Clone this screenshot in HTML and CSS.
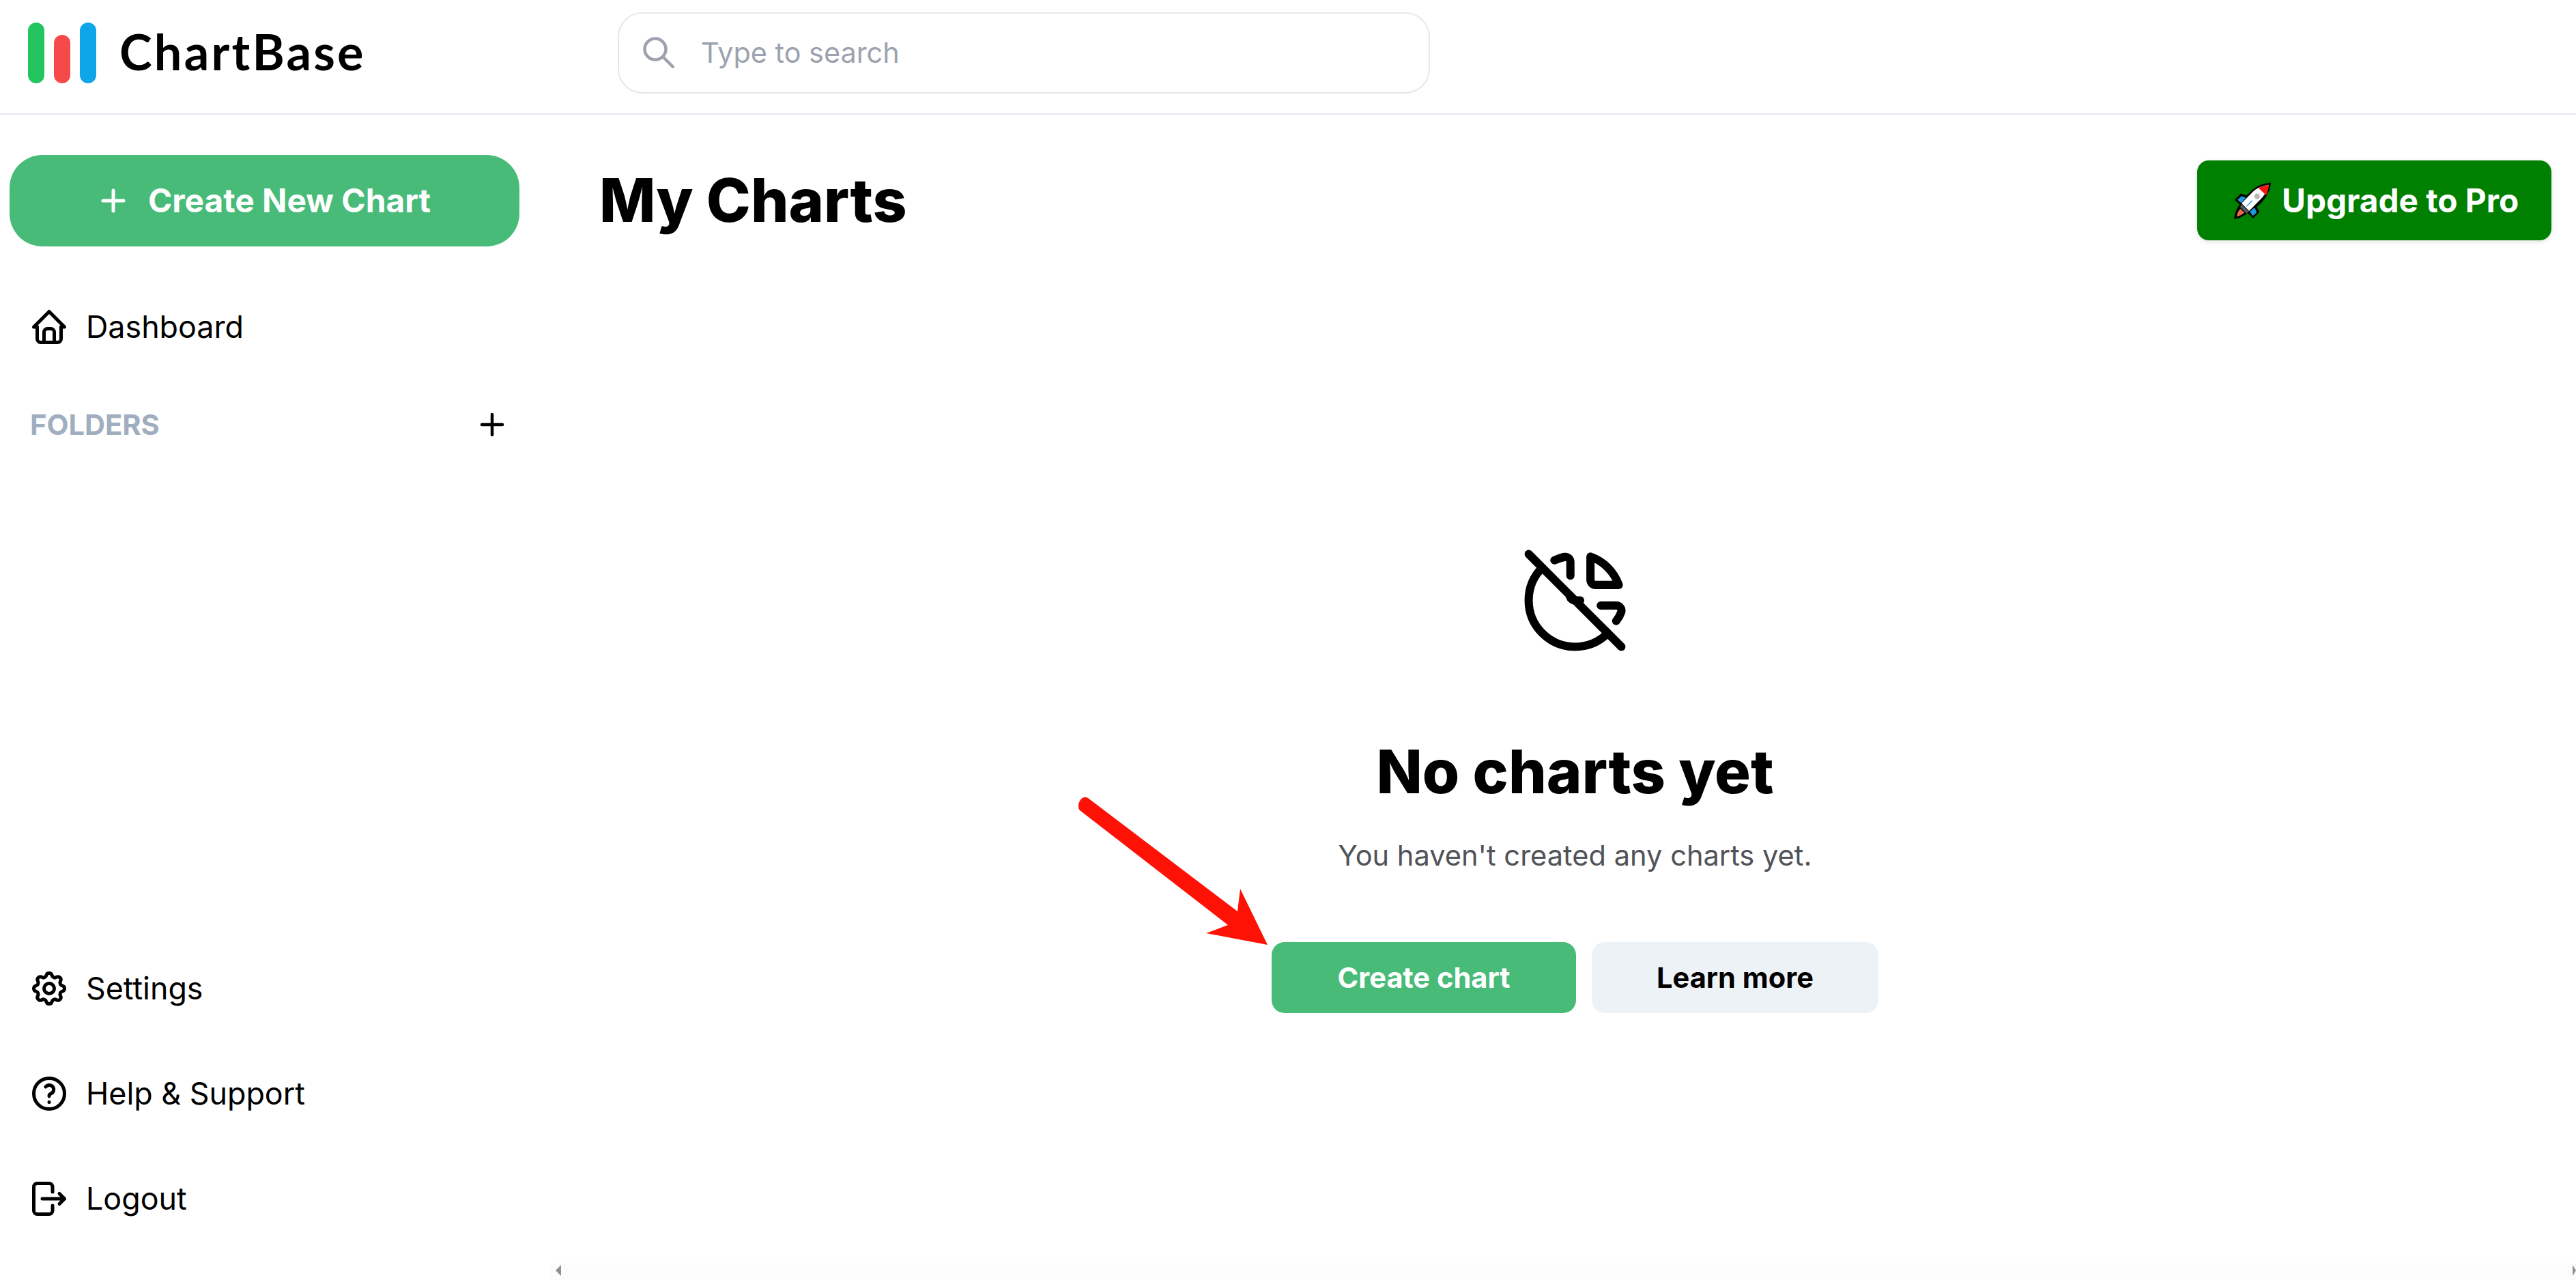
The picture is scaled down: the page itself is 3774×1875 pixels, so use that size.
FILE: index.html
```html
<!DOCTYPE html>
<html lang="en">
<head>
    <meta charset="UTF-8">
    <title>ChartBase - My Charts</title>
    <link rel="stylesheet" href="styles.css">
</head>
<body>

<header class="topbar">
    <div class="logo">
        <span class="logo-bars">
            <i class="bar bar-green"></i>
            <i class="bar bar-red"></i>
            <i class="bar bar-blue"></i>
        </span>
        <span class="logo-text">ChartBase</span>
    </div>
    <div class="search">
        <svg class="search-icon" viewBox="0 0 46 46" fill="none" stroke="#9ca3af" stroke-width="4.5" stroke-linecap="round" stroke-linejoin="round">
            <circle cx="18" cy="18" r="15.5"/>
            <path d="M30 30l14 14"/>
        </svg>
        <span class="search-text">Type to search</span>
    </div>
</header>

<div class="layout">
    <aside class="sidebar">
        <button class="new-chart">
            <svg class="new-chart-plus" viewBox="0 0 36 36" fill="none" stroke="#fff" stroke-width="5" stroke-linecap="round">
                <path d="M18 3v30M3 18h30"/>
            </svg>
            Create New Chart
        </button>

        <a class="nav-item nav-dashboard">
            <svg class="nav-icon" viewBox="0 0 24 24" fill="none" stroke="#000" stroke-width="2" stroke-linecap="round" stroke-linejoin="round">
                <path d="M5 12H3l9-9 9 9h-2"/>
                <path d="M5 12v7a2 2 0 0 0 2 2h10a2 2 0 0 0 2-2v-7"/>
                <path d="M9 21v-6a2 2 0 0 1 2-2h2a2 2 0 0 1 2 2v6"/>
            </svg>
            Dashboard
        </a>

        <div class="folders">
            <span class="folders-label">FOLDERS</span>
            <svg class="folders-plus" viewBox="0 0 36 36" fill="none" stroke="#000" stroke-width="4.5" stroke-linecap="round">
                <path d="M18 3v30M3 18h30"/>
            </svg>
        </div>

        <nav class="nav-bottom">
            <a class="nav-item">
                <svg class="nav-icon" viewBox="0 0 24 24" fill="none" stroke="#000" stroke-width="2" stroke-linecap="round" stroke-linejoin="round">
                    <path d="M10.325 4.317c.426-1.756 2.924-1.756 3.35 0a1.724 1.724 0 0 0 2.573 1.066c1.543-.94 3.31.826 2.37 2.37a1.724 1.724 0 0 0 1.065 2.572c1.756.426 1.756 2.924 0 3.35a1.724 1.724 0 0 0-1.066 2.573c.94 1.543-.826 3.31-2.37 2.37a1.724 1.724 0 0 0-2.572 1.065c-.426 1.756-2.924 1.756-3.35 0a1.724 1.724 0 0 0-2.573-1.066c-1.543.94-3.31-.826-2.37-2.37a1.724 1.724 0 0 0-1.065-2.572c-1.756-.426-1.756-2.924 0-3.35a1.724 1.724 0 0 0 1.066-2.573c-.94-1.543.826-3.31 2.37-2.37 1 .608 2.296.07 2.572-1.065z"/>
                    <circle cx="12" cy="12" r="3"/>
                </svg>
                Settings
            </a>
            <a class="nav-item">
                <svg class="nav-icon" viewBox="0 0 24 24" fill="none" stroke="#000" stroke-width="2" stroke-linecap="round" stroke-linejoin="round">
                    <circle cx="12" cy="12" r="9"/>
                    <path d="M12 17v.01"/>
                    <path d="M12 13.5a1.5 1.5 0 0 1 1-1.5 2.6 2.6 0 1 0-3-4"/>
                </svg>
                Help &amp; Support
            </a>
            <a class="nav-item">
                <svg class="nav-icon" viewBox="0 0 24 24" fill="none" stroke="#000" stroke-width="2" stroke-linecap="round" stroke-linejoin="round">
                    <path d="M14 8V5a2 2 0 0 0-2-2H5a2 2 0 0 0-2 2v14a2 2 0 0 0 2 2h7a2 2 0 0 0 2-2v-3"/>
                    <path d="M8 12h13l-3-3m0 6l3-3"/>
                </svg>
                Logout
            </a>
        </nav>
    </aside>

    <main class="main">
        <div class="content">
            <div class="title-row">
                <h1 class="page-title">My Charts</h1>
                <button class="upgrade">
                    <svg class="rocket" viewBox="97 82 161 160">
                        <path d="M258 83C232 86 205 92 178 114L151 140 127 131 99 158 122 178C110 195 100 218 97 242 122 240 143 228 156 216L180 239 207 213 197 188C226 165 254 130 258 83Z" fill="#000"/>
                        <path d="M249 93C225 96 200 105 182 120L130 173 163 207 215 154C232 136 245 115 249 93Z" fill="#fff"/>
                        <path d="M249 93C232 96 218 99 204 107L238 139C244 124 248 110 249 93Z" fill="#f5140f"/>
                        <path d="M112 158L130 142 149 149 128 172Z" fill="#1d9be0"/>
                        <path d="M166 210L187 192 196 214 179 228Z" fill="#1d9be0"/>
                        <path d="M128 176L163 209 150 218 124 190Z" fill="#55565a"/>
                        <path d="M108 232C111 218 116 206 124 197L142 214C132 223 120 229 108 232Z" fill="#ef6a45"/>
                        <circle cx="198" cy="143" r="12" fill="#b4b6b8" stroke="#d6d8da" stroke-width="3"/>
                        <path d="M151 187L176 162" stroke="#1d9be0" stroke-width="4"/>
                    </svg>
                    Upgrade to Pro
                </button>
            </div>

            <section class="empty">
                <svg class="empty-icon" viewBox="0 0 24 24" fill="none" stroke="#000" stroke-width="1.6" stroke-linecap="round" stroke-linejoin="round">
                    <path d="M3 3l18 18"/>
                    <path d="M5.63 5.64a9 9 0 1 0 12.74 12.72"/>
                    <path d="M11 11a1 1 0 0 0 1 1h1"/>
                    <path d="M8 4.2c.7-.3 1.3-.5 2-.65a1 1 0 0 1 1.1 1V7.2"/>
                    <path d="M15 3.5a9 9 0 0 1 5.5 5.5h-4.5a1 1 0 0 1-1-1z"/>
                    <path d="M17 13h3a1 1 0 0 1 1 1.2c-.2.6-.5 1.2-1 1.8"/>
                </svg>
                <h2 class="empty-title">No charts yet</h2>
                <p class="empty-text">You haven't created any charts yet.</p>
                <div class="empty-actions">
                    <button class="btn btn-green">Create chart</button>
                    <button class="btn btn-gray">Learn more</button>
                </div>
            </section>
        </div>

        <div class="hscroll">
            <i class="hscroll-left"></i>
            <i class="hscroll-right"></i>
        </div>

        <!-- annotation drawn over the screenshot -->
        <svg class="red-arrow" viewBox="0 0 300 240">
            <path d="M243 175L247 142 287 224 197 207 229 195 12 27C6 20 14 3 24 9Z" fill="#ff1206"/>
        </svg>
    </main>
</div>

</body>
</html>
```

FILE: styles.css
```css
* {
    box-sizing: border-box;
}

html,
body {
    margin: 0;
    height: 100%;
    overflow: hidden;
}

body {
    display: flex;
    flex-direction: column;
    background-color: #fff;
    font-family: Inter, "Liberation Sans", sans-serif;
    color: #000;
}

button {
    border: none;
    font-family: inherit;
}

/* Top bar */
.topbar {
    flex: none;
    display: flex;
    align-items: center;
    height: 168px;
    border-bottom: 2px solid #e2e8f0;
    padding: 0 0 12px 41px;
}

.logo {
    display: flex;
    align-items: center;
    width: 864px;
}

.logo-bars {
    display: flex;
    align-items: flex-end;
    gap: 14px;
    height: 89px;
}

.bar {
    display: block;
    width: 24px;
    border-radius: 12px;
}

.bar-green {
    height: 89px;
    background-color: #22c55e;
}

.bar-red {
    height: 71px;
    background-color: #f64a4a;
}

.bar-blue {
    height: 89px;
    background-color: #0ea5e9;
}

.logo-text {
    margin: 0 0 4px 34px;
    font-family: Lato, sans-serif;
    font-size: 72px;
    font-weight: 700;
    line-height: 1;
    letter-spacing: 3.2px;
}

.search {
    display: flex;
    align-items: center;
    width: 1190px;
    height: 119px;
    padding-left: 35px;
    border: 2px solid #e5e7eb;
    border-radius: 36px;
}

.search-icon {
    width: 46px;
    height: 46px;
}

.search-text {
    margin-left: 39px;
    font-size: 41.4px;
    color: #9ca3af;
}

/* Sidebar */
.layout {
    flex: 1;
    display: flex;
    min-height: 0;
}

.sidebar {
    flex: none;
    display: flex;
    flex-direction: column;
    width: 804px;
    padding: 59px 43px 0 14px;
}

.new-chart {
    display: flex;
    align-items: center;
    justify-content: center;
    gap: 33px;
    flex: none;
    height: 134px;
    padding-left: 10px;
    border-radius: 48px;
    background-color: #48bb78;
    color: #fff;
    font-size: 47.8px;
    font-weight: 700;
}

.new-chart-plus {
    width: 36px;
    height: 36px;
}

.nav-item {
    display: flex;
    align-items: center;
    gap: 24px;
    height: 60px;
    padding-left: 28px;
    font-size: 44.8px;
    color: #000;
}

.nav-icon {
    flex: none;
    width: 60px;
    height: 60px;
}

.nav-dashboard {
    margin-top: 88px;
}

.folders {
    display: flex;
    align-items: center;
    justify-content: space-between;
    margin-top: 88px;
    padding: 0 22px 0 30px;
}

.folders-label {
    font-size: 41.6px;
    font-weight: 700;
    color: #a0aec0;
}

.folders-plus {
    width: 36px;
    height: 36px;
}

.nav-bottom {
    margin-top: auto;
    display: flex;
    flex-direction: column;
    gap: 94px;
    padding-bottom: 89px;
}

/* Main area */
.main {
    flex: 1;
    position: relative;
    display: flex;
    flex-direction: column;
    min-width: 0;
}

.content {
    flex: 1;
    min-height: 0;
    padding: 67px 36px 0 74px;
}

.title-row {
    display: flex;
    align-items: center;
    justify-content: space-between;
    height: 117px;
}

.page-title {
    margin: 0;
    font-size: 87.5px;
    font-weight: 800;
    line-height: 1;
}

.upgrade {
    display: flex;
    align-items: center;
    gap: 16px;
    width: 519px;
    height: 117px;
    padding-left: 54px;
    border-radius: 17px;
    background-color: #008000;
    color: #fff;
    font-size: 47.7px;
    font-weight: 700;
    box-shadow: 0 2px 6px rgba(0, 0, 0, 0.12);
}

.rocket {
    width: 54px;
    height: 54px;
}

.empty {
    display: flex;
    flex-direction: column;
    align-items: center;
    margin: 437px 1px 0 0;
}

.empty-icon {
    width: 181px;
    height: 181px;
}

.empty-title {
    margin: 106px 0 0;
    font-size: 88px;
    font-weight: 800;
    line-height: 108px;
}

.empty-text {
    margin: 38px 0 0;
    font-size: 41.6px;
    line-height: 1.5;
    color: #505358;
}

.empty-actions {
    display: flex;
    gap: 23px;
    margin-top: 96px;
}

.btn {
    height: 104px;
    border-radius: 19px;
    font-size: 41.6px;
    font-weight: 700;
}

.btn-green {
    width: 446px;
    background-color: #48bb78;
    color: #fff;
}

.btn-gray {
    width: 420px;
    background-color: #edf2f7;
    color: #000;
}

/* Horizontal scrollbar at the bottom of the main area */
.hscroll {
    flex: none;
    display: flex;
    align-items: center;
    justify-content: space-between;
    height: 25px;
    padding: 0 0 3px 10px;
    background-color: #fcfcfc;
}

.hscroll-left {
    width: 0;
    height: 0;
    border-top: 8px solid transparent;
    border-bottom: 8px solid transparent;
    border-right: 8px solid #8f8f8f;
}

.hscroll-right {
    width: 0;
    height: 0;
    border-top: 8px solid transparent;
    border-bottom: 8px solid transparent;
    border-left: 5px solid #8f8f8f;
}

.red-arrow {
    position: absolute;
    left: 766px;
    top: 992px;
    width: 300px;
    height: 240px;
}
```
